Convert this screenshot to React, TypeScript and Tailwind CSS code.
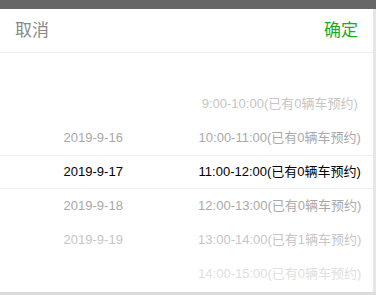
const dates = ["", "", "2019-9-16", "2019-9-17", "2019-9-18", "2019-9-19", ""];
const slots = [
  "",
  "9:00-10:00(已有0辆车预约)",
  "10:00-11:00(已有0辆车预约)",
  "11:00-12:00(已有0辆车预约)",
  "12:00-13:00(已有0辆车预约)",
  "13:00-14:00(已有1辆车预约)",
  "14:00-15:00(已有0辆车预约)",
];
// colour by distance from the selected row
const tone = ["text-black", "text-[#a9a9a9]", "text-[#c6c6c6]", "text-[#e0e0e0]"];

export default function App() {
  return (
    <div
      className="w-[376px] h-[295px] bg-[#666666] flex flex-col overflow-hidden"
      style={{ fontFamily: '"Liberation Sans", Arial, "Noto Sans CJK SC", sans-serif' }}
    >
      <div className="h-[9px] shrink-0" />
      <div className="flex flex-1 bg-[#e6e6e6]">
        <div className="w-[373px] bg-white flex flex-col">
          <div className="h-[44px] flex items-center justify-between px-[15px] border-b border-[#eeeeee]">
            <span className="text-[17px] text-[#888888]">取消</span>
            <span className="text-[17px] text-[#1aad19]">确定</span>
          </div>
          <div className="relative">
            <div className="absolute left-0 right-0 top-[102px] h-[34px] border-y border-[#efefef]" />
            {slots.map((s, i) => {
              const d = Math.abs(i - 3);
              return (
                <div key={i} className={`h-[34px] flex items-center text-[13px] ${tone[d]}`}>
                  <span className="w-1/2 text-center">{dates[i]}</span>
                  <span className="w-1/2 text-center">{s}</span>
                </div>
              );
            })}
          </div>
        </div>
      </div>
      <div className="h-[3px] shrink-0 bg-[#dcdcdc]" />
    </div>
  );
}
